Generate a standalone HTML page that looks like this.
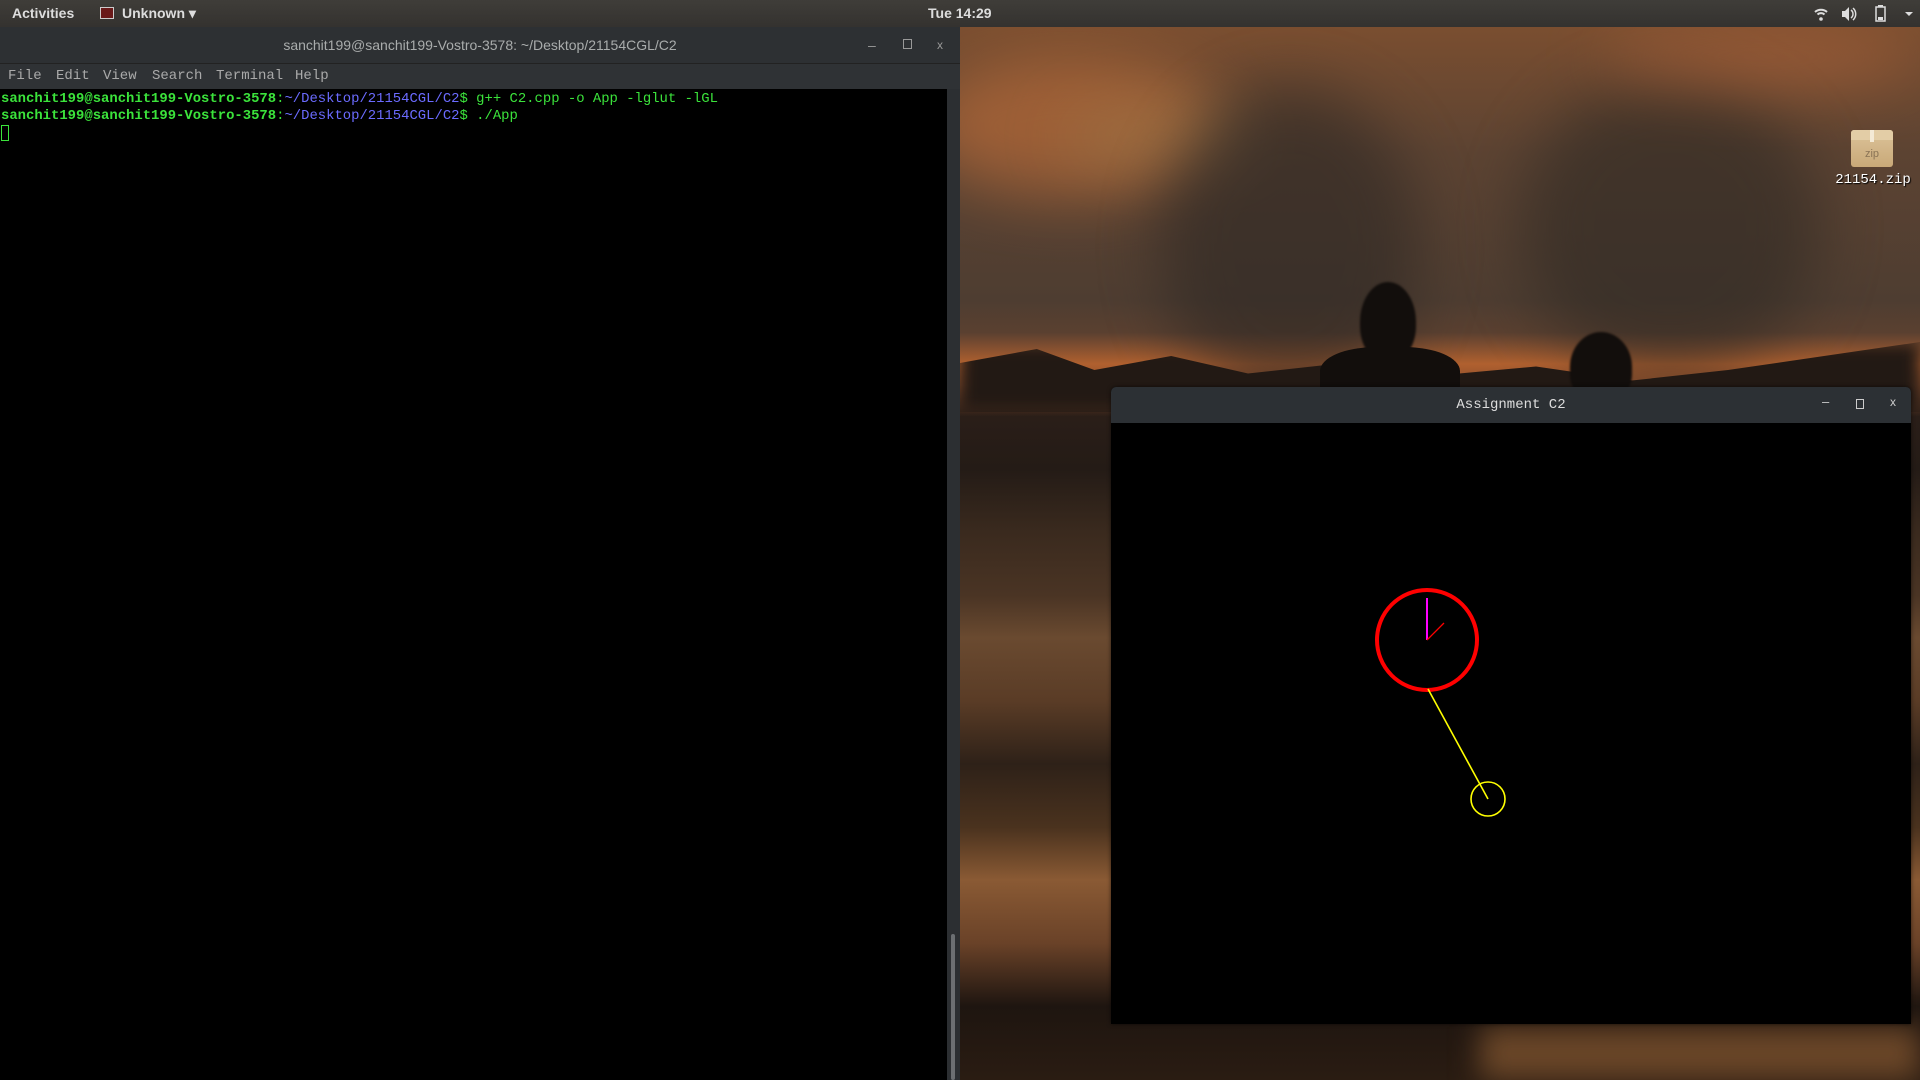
<!DOCTYPE html>
<html><head><meta charset="utf-8"><style>
*{margin:0;padding:0;box-sizing:border-box}
body{width:1920px;height:1080px;overflow:hidden;background:#000;font-family:"Liberation Sans",sans-serif;position:relative}
.abs{position:absolute}
#top{left:0;top:0;width:1920px;height:27px;background:linear-gradient(#3f3d39,#34322f);color:#ddd;font-size:14px;font-weight:bold}
#desk{left:960px;top:27px;width:960px;height:1053px;overflow:hidden;background:linear-gradient(180deg,#7a4e30 0%,#5c4332 12%,#4e3d31 26%,#5a4030 29%,#b0602f 32%,#8a4e2c 34%,#2a1e18 37%,#241b16 42%,#3a2a1e 48%,#4a3424 54%,#6a4a30 58%,#5a3c26 64%,#2e2118 70%,#4a321e 76%,#8a5a34 81%,#6a4228 87%,#1e1510 93%,#2a1c12 100%)}
.b{position:absolute;border-radius:50%;filter:blur(30px)}
#term{left:0;top:27px;width:960px;height:1053px;background:#000}
#ttl{left:0;top:0;width:960px;height:37px;background:#2d3033;color:#a9acac;font-family:"Liberation Sans",sans-serif;font-size:14px;text-align:center;line-height:36px;border-bottom:1px solid #222}
#menu{left:0;top:37px;width:960px;height:25px;background:#2f3235;color:#aaa;font-size:14px;font-family:"Liberation Mono",monospace}
#menu span{position:absolute;top:4px}
pre{position:absolute;left:1px;top:64px;font-family:"Liberation Mono",monospace;font-size:13.9px;line-height:17px;color:#3be33b}
.u{font-weight:bold}
.bl{color:#6b6bff}
#app{left:1111px;top:387px;width:800px;height:637px;background:#000;border-radius:5px 5px 0 0;overflow:hidden;box-shadow:0 0 4px rgba(0,0,0,.6)}
#apt{height:36px;background:#2c3034;color:#ddd;font-size:14px;text-align:center;line-height:36px;font-family:"Liberation Mono",monospace}
.wb{position:absolute;color:#ccc;font-size:13px}
</style></head><body>
<div id="desk" class="abs">
 <div class="b" style="left:-40px;top:30px;width:300px;height:140px;background:#c4703a;opacity:.6"></div>
 <div class="b" style="left:100px;top:80px;width:200px;height:60px;background:#9a7a4a;opacity:.5"></div>
 <div class="b" style="left:200px;top:60px;width:260px;height:320px;background:#2e2824;opacity:.6"></div>
 <div class="b" style="left:560px;top:50px;width:300px;height:300px;background:#302a24;opacity:.6"></div>
 <div class="b" style="left:640px;top:0;width:320px;height:60px;background:#b0643a;opacity:.6"></div>
 <div class="abs" style="left:0;top:315px;width:960px;height:70px;background:#221914;filter:blur(8px);clip-path:polygon(0 30%,8% 10%,14% 40%,22% 20%,30% 45%,40% 30%,48% 50%,60% 35%,70% 55%,80% 40%,90% 20%,100% 0,100% 100%,0 100%)"></div>
 <div class="abs" style="left:400px;top:255px;width:56px;height:80px;border-radius:50% 50% 45% 45%;background:#120e0c;filter:blur(1px)"></div>
 <div class="abs" style="left:360px;top:320px;width:140px;height:60px;border-radius:40% 40% 0 0;background:#120e0c"></div>
 <div class="abs" style="left:610px;top:305px;width:62px;height:70px;border-radius:50% 50% 40% 40%;background:#120e0c;filter:blur(1px)"></div>
 <div class="abs" style="left:520px;top:1000px;width:440px;height:53px;background:#6a4628;filter:blur(14px)"></div>
 <div class="abs" style="left:891px;top:103px;width:42px;height:37px;background:linear-gradient(#dcc39a,#c9a978);border-radius:3px"></div>
 <div class="abs" style="left:891px;top:103px;width:42px;height:10px;background:#e3cda6;border-radius:3px 3px 0 0"></div>
 <div class="abs" style="left:910px;top:103px;width:4px;height:12px;background:#f4ead6"></div>
 <div class="abs" style="left:891px;top:121px;width:42px;text-align:center;font-size:11px;color:#8a7355">zip</div>
 <div class="abs" style="left:868px;top:145px;width:90px;text-align:center;font-size:14px;color:#fff;font-family:'Liberation Mono',monospace;text-shadow:1px 1px 1px #000">21154.zip</div>
</div>
<div id="top" class="abs">
 <span class="abs" style="left:12px;top:5px">Activities</span>
 <span class="abs" style="left:100px;top:7px;width:14px;height:12px;border:1px solid #ccc;background:#6a1a1a"></span>
 <span class="abs" style="left:122px;top:5px">Unknown ▾</span>
 <span class="abs" style="left:928px;top:5px">Tue 14:29</span>
 <svg class="abs" style="left:1810px;top:4px" width="110" height="20" viewBox="0 0 110 20">
  <g fill="none" stroke="#ddd" stroke-width="2"><path d="M5 8a9 9 0 0 1 12 0M7.5 10.5a5 5 0 0 1 7 0"/></g><circle cx="11" cy="15" r="1.8" fill="#ddd"/>
  <path d="M32 7h3l4-4v14l-4-4h-3z" fill="#ddd"/><path d="M41 6a5 5 0 0 1 0 8M43 4a8 8 0 0 1 0 12" stroke="#ddd" fill="none" stroke-width="1.5"/>
  <rect x="66" y="3" width="9" height="14" fill="none" stroke="#ddd" stroke-width="1.5"/><rect x="68" y="1" width="5" height="2" fill="#ddd"/><rect x="68" y="13" width="5" height="3" fill="#ddd"/>
  <path d="M95 8h8l-4 4z" fill="#ddd"/>
 </svg>
</div>
<div id="term" class="abs">
 <div id="ttl" class="abs">sanchit199@sanchit199-Vostro-3578: ~/Desktop/21154CGL/C2
  <span class="abs" style="left:868px;top:0;color:#999">–</span>
  <span class="abs" style="left:903px;top:12px;width:9px;height:10px;border:1px solid #999"></span>
  <span class="abs" style="left:937px;top:0;color:#999;font-size:12px">x</span>
 </div>
 <div id="menu" class="abs"><span style="left:8px">File</span><span style="left:56px">Edit</span><span style="left:103px">View</span><span style="left:152px">Search</span><span style="left:216px">Terminal</span><span style="left:295px">Help</span></div>
 <pre><span class="u">sanchit199@sanchit199-Vostro-3578</span>:<span class="bl">~/Desktop/21154CGL/C2</span>$ g++ C2.cpp -o App -lglut -lGL
<span class="u">sanchit199@sanchit199-Vostro-3578</span>:<span class="bl">~/Desktop/21154CGL/C2</span>$ ./App
<span style="display:inline-block;width:8px;height:16px;border:1px solid #3be33b;vertical-align:middle"></span></pre>
 <div class="abs" style="left:947px;top:62px;width:13px;height:991px;background:#2c2f32"></div>
 <div class="abs" style="left:951px;top:907px;width:4px;height:146px;background:#6c6f72;border-radius:2px"></div>
</div>
<div id="app" class="abs">
 <div id="apt">Assignment C2</div>
 <span class="wb" style="left:711px;top:7px">–</span>
 <span class="abs" style="left:745px;top:12px;width:8px;height:10px;border:1px solid #ccc"></span>
 <span class="wb" style="left:779px;top:8px;font-size:12px">x</span>
 <svg class="abs" style="left:0;top:36px" width="800" height="601">
  <circle cx="316" cy="217" r="50" fill="none" stroke="#f00" stroke-width="4"/>
  <line x1="316" y1="175" x2="316" y2="217" stroke="#f0f" stroke-width="2"/>
  <line x1="316" y1="217" x2="333" y2="200" stroke="#f00" stroke-width="1.3"/>
  <line x1="317" y1="266" x2="377" y2="376" stroke="#ff0" stroke-width="1.6"/>
  <circle cx="377" cy="376" r="17" fill="none" stroke="#ff0" stroke-width="1.6"/>
 </svg>
</div>
</body></html>
